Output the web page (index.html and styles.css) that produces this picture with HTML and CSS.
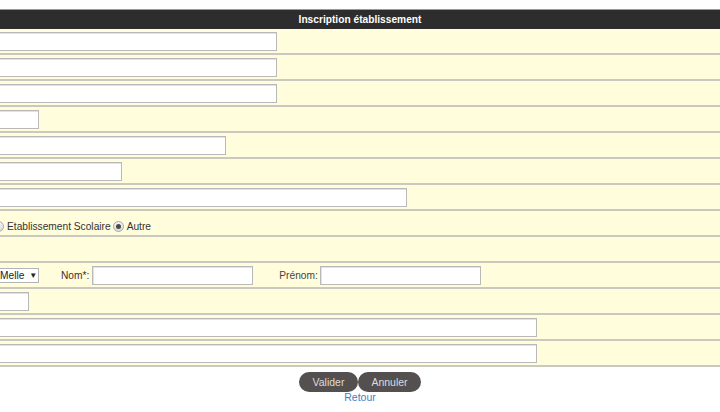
FILE: index.html
```html
<!DOCTYPE html>
<html lang="fr">
<head>
<meta charset="utf-8">
<title>Inscription établissement</title>
<link rel="stylesheet" href="styles.css">
</head>
<body>
<div class="page">
  <div class="header">Inscription établissement</div>
  <div class="form">
    <div class="row"><input class="field w287" type="text"></div>
    <div class="row"><input class="field w287" type="text"></div>
    <div class="row"><input class="field w287" type="text"></div>
    <div class="row"><input class="field w49" type="text"></div>
    <div class="row"><input class="field w236" type="text"></div>
    <div class="row"><input class="field w132" type="text"></div>
    <div class="row"><input class="field w417" type="text"></div>
    <div class="row radio-row">
      <span class="radio first"></span>
      <span class="radio-label">Etablissement Scolaire</span>
      <span class="radio checked"></span>
      <span class="radio-label">Autre</span>
    </div>
    <div class="row"></div>
    <div class="row">
      <span class="select">Melle <span class="arrow">▼</span></span>
      <span class="label nom">Nom*:</span>
      <input class="field w161" type="text">
      <span class="label prenom">Prénom:</span>
      <input class="field w161" type="text">
    </div>
    <div class="row"><input class="field w39" type="text"></div>
    <div class="row"><input class="field w547" type="text"></div>
    <div class="row"><input class="field w547" type="text"></div>
  </div>
  <div class="actions">
    <div class="buttons">
      <button class="btn valider" type="button">Valider</button><button class="btn annuler" type="button">Annuler</button>
    </div>
    <a class="retour" href="#">Retour</a>
  </div>
</div>
</body>
</html>
```

FILE: styles.css
```css
html, body {
  margin: 0;
  padding: 0;
  background: #ffffff;
  font-family: "Liberation Sans", Arial, sans-serif;
  font-size: 10.2px;
  color: #333333;
  overflow: hidden;
}

.page {
  padding-top: 9px;
}

.header {
  height: 20px;
  line-height: 20px;
  background: #2d2d2d;
  border-top: 1px solid #9a9a9a;
  box-sizing: border-box;
  color: #ffffff;
  font-weight: bold;
  font-size: 10.2px;
  text-align: center;
}

.row {
  display: flex;
  align-items: center;
  height: 24px;
  background: #fffddc;
  border-bottom: 2px solid #c9c9bf;
}

.field {
  box-sizing: border-box;
  height: 19px;
  margin: 0 0 0 -10px;
  padding: 0 3px;
  background: #ffffff;
  border: 1px solid #b9b9b9;
  box-shadow: inset 1px 1px 0 #e2e2e2;
  font: inherit;
}

.w287 { width: 287px; }
.w49 { width: 49px; }
.w236 { width: 236px; }
.w132 { width: 132px; }
.w417 { width: 417px; }
.w161 { width: 161px; margin-left: 0; }
.w39 { width: 39px; }
.w547 { width: 547px; }

.radio-row {
  padding-top: 6px;
  height: 18px;
}

.radio {
  box-sizing: border-box;
  width: 11px;
  height: 11px;
  border-radius: 50%;
  border: 1px solid #a8a8a8;
  background: linear-gradient(#f4f4f4, #dcdcdc);
  flex: none;
  position: relative;
}

.radio.first {
  margin-left: -7px;
}

.radio.checked {
  margin-left: 2px;
}

.radio.checked::after {
  content: "";
  position: absolute;
  left: 2px;
  top: 2px;
  width: 5px;
  height: 5px;
  border-radius: 50%;
  background: #4a4a4a;
}

.radio-label {
  margin-left: 3px;
  color: #333333;
}

.select {
  box-sizing: border-box;
  width: 49px;
  height: 15px;
  margin-left: -10px;
  padding-left: 9px;
  background: #ffffff;
  border: 1px solid #b5b5b5;
  display: flex;
  align-items: center;
  color: #222222;
  white-space: nowrap;
}

.select .arrow {
  font-size: 8px;
  margin-left: 5px;
}

.label.nom {
  margin-left: 22px;
  margin-right: 3px;
  color: #4a2c2c;
}

.label.prenom {
  margin-left: 26px;
  margin-right: 2px;
  color: #444444;
}

.actions {
  display: flex;
  flex-direction: column;
  align-items: center;
  padding-top: 5px;
}

.buttons {
  display: flex;
}

.btn {
  height: 20px;
  border: none;
  border-radius: 10px;
  background: #545050;
  color: #dcdcdc;
  font: inherit;
  font-size: 10.5px;
  padding: 0;
  cursor: pointer;
}

.valider { width: 59px; }
.annuler { width: 63px; }

.retour {
  color: #3b7fc4;
  text-decoration: none;
  font-size: 10.5px;
  line-height: 11px;
}
```
